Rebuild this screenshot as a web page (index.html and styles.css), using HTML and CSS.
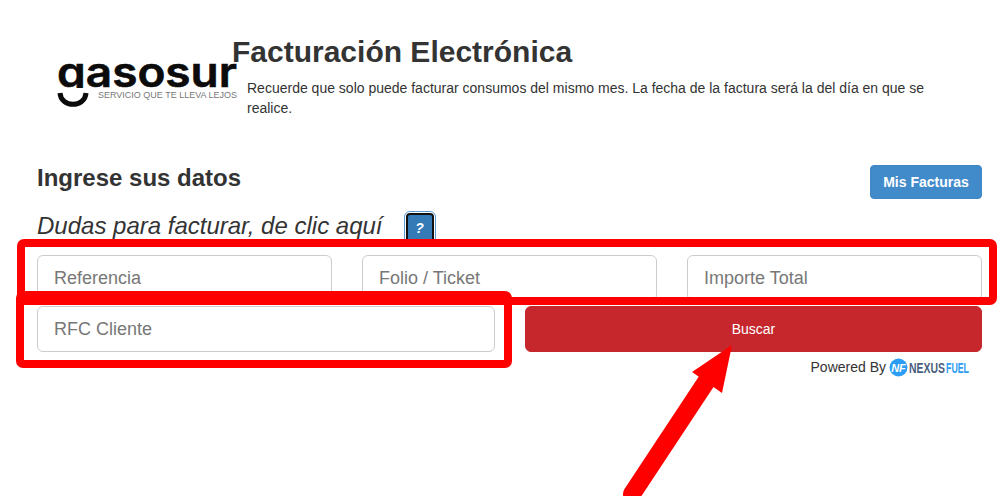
FILE: index.html
```html
<!DOCTYPE html>
<html lang="es">
<head>
<meta charset="utf-8">
<title>Facturación Electrónica</title>
<link rel="stylesheet" href="styles.css">
</head>
<body>
<main class="page">
  <header class="head">
    <svg class="logo" width="182" height="64" viewBox="0 0 182 64" role="img" aria-label="gasosur">
      <text class="logo-word" x="1" y="39" textLength="180" lengthAdjust="spacingAndGlyphs">gasosur</text>
      <rect class="logo-mask" x="0" y="40" width="37" height="24"/>
      <path class="logo-smile" d="M4 45C5 60 29 60 30 45"/>
      <text class="logo-tag" x="42" y="50" textLength="139" lengthAdjust="spacingAndGlyphs">SERVICIO QUE TE LLEVA LEJOS</text>
    </svg>
    <div class="head-text">
      <h1 class="title">Facturación Electrónica</h1>
      <p class="lead">Recuerde que solo puede facturar consumos del mismo mes. La fecha de la factura será la del día en que se realice.</p>
    </div>
  </header>

  <section class="data-head">
    <h2 class="subtitle">Ingrese sus datos</h2>
    <button class="btn btn-facturas" type="button">Mis Facturas</button>
  </section>

  <div class="help">
    <span class="help-text">Dudas para facturar, de clic aquí</span>
    <button class="btn-help" type="button">?</button>
  </div>

  <form class="fields">
    <input class="field" type="text" placeholder="Referencia">
    <input class="field" type="text" placeholder="Folio / Ticket">
    <input class="field" type="text" placeholder="Importe Total">
  </form>
  <div class="fields-2">
    <input class="field" type="text" placeholder="RFC Cliente">
    <button class="btn btn-buscar" type="button">Buscar</button>
  </div>
  <div class="powered">
    <span>Powered By</span>
    <svg class="nexus" width="81" height="20" viewBox="0 0 81 20" role="img" aria-label="NexusFuel">
      <circle class="nexus-disc" cx="9.500" cy="10.500" r="9"/>
      <text class="nexus-mark" x="9.500" y="14.500" text-anchor="middle">NF</text>
      <text class="nexus-word nexus-dark" x="20" y="15.500" textLength="36" lengthAdjust="spacingAndGlyphs">NEXUS</text>
      <text class="nexus-word nexus-light" x="57" y="15.500" textLength="23" lengthAdjust="spacingAndGlyphs">FUEL</text>
    </svg>
  </div>
</main>

<svg class="marks" width="1008" height="496" viewBox="0 0 1008 496" aria-hidden="true">
  <rect class="mark-box" x="21" y="243" width="972" height="58" rx="3"/>
  <rect class="mark-box" x="20" y="295" width="488" height="69" rx="3"/>
  <line class="mark-shaft" x1="706" y1="382" x2="632" y2="494"/>
  <polygon class="mark-head" points="732,345 692,372 722,393"/>
</svg>
</body>
</html>
```
FILE: styles.css
```css
* { box-sizing: border-box; }

html, body { margin: 0; height: 496px; overflow: hidden; background: #fff; }

body {
  position: relative;
  font-family: "Liberation Sans", Arial, sans-serif;
  font-size: 14px;
  color: #333;
}

.page { padding: 0 26px 0 37px; }

.head { display: flex; align-items: flex-start; padding: 34px 0 0 20px; height: 165px; }
.logo { flex: none; margin: 14px -6px 0 -1px; }
.logo-word { font-family: Inter, sans-serif; font-size: 41px; font-weight: 600; fill: #0b0b0b; stroke: #0b0b0b; stroke-width: 0.6; }
.logo-mask { fill: #fff; }
.logo-smile { fill: none; stroke: #0b0b0b; stroke-width: 5; }
.logo-tag { font-family: "Liberation Sans", sans-serif; font-size: 8.500px; fill: #777; }

.head-text { flex: 1; padding-right: 48px; }
.title { margin: 0; font-size: 30px; line-height: 36px; font-weight: 700; color: #333; }
.lead { margin: 8px 0 0 15px; line-height: 20px; }

.data-head { display: flex; justify-content: space-between; align-items: flex-start; }
.subtitle { margin: 0; font-size: 24px; line-height: 26px; font-weight: 700; }

.btn { border: 1px solid transparent; border-radius: 4px; color: #fff; font: inherit; }
.btn-facturas {
  width: 112px; height: 34px;
  background: #428bca; border-color: #3f86c4;
  font-weight: 700;
}

.help { display: flex; align-items: center; gap: 20px; margin-top: 10px; height: 34px; }
.help-text { font-size: 24px; font-style: italic; }
.btn-help {
  width: 28px; height: 30px; margin-top: 4px; margin-left: 3px;
  background: #337ab7; border: 2px solid #111; border-radius: 4px;
  outline: 1px solid #5b9bd5; outline-offset: 1px;
  color: #fff; font: italic 700 14px "Liberation Sans", sans-serif; padding: 0;
}

.fields { display: grid; grid-template-columns: repeat(3, 295px); gap: 30px; margin-top: 12px; }
.fields-2 { display: grid; grid-template-columns: 458px 457px; gap: 30px; margin-top: 5px; }

.field {
  display: block; width: 100%; height: 46px;
  padding: 10px 16px;
  border: 1px solid #ccc; border-radius: 6px;
  background: #fff;
  font: 18px "Liberation Sans", sans-serif;
  color: #555;
}
.field::placeholder { color: #777; opacity: 1; }

.btn-buscar { height: 46px; background: #c5272d; border-color: #c5272d; border-radius: 6px; }

.powered { display: flex; justify-content: flex-end; align-items: center; gap: 3px; margin-top: 5px; padding-right: 12px; height: 20px; }
.nexus { flex: none; }
.nexus-disc { fill: #2b9df4; }
.nexus-mark { font: italic 700 11px "Liberation Sans", sans-serif; fill: #fff; }
.nexus-word { font: 700 14px "Liberation Sans", sans-serif; }
.nexus-dark { fill: #4a5f80; }
.nexus-light { fill: #2b9df4; }

.marks { position: absolute; left: 0; top: 0; pointer-events: none; }
.mark-box { fill: none; stroke: #f00; stroke-width: 8; }
.mark-shaft { stroke: #f00; stroke-width: 18; stroke-linecap: round; }
.mark-head { fill: #f00; }
```
